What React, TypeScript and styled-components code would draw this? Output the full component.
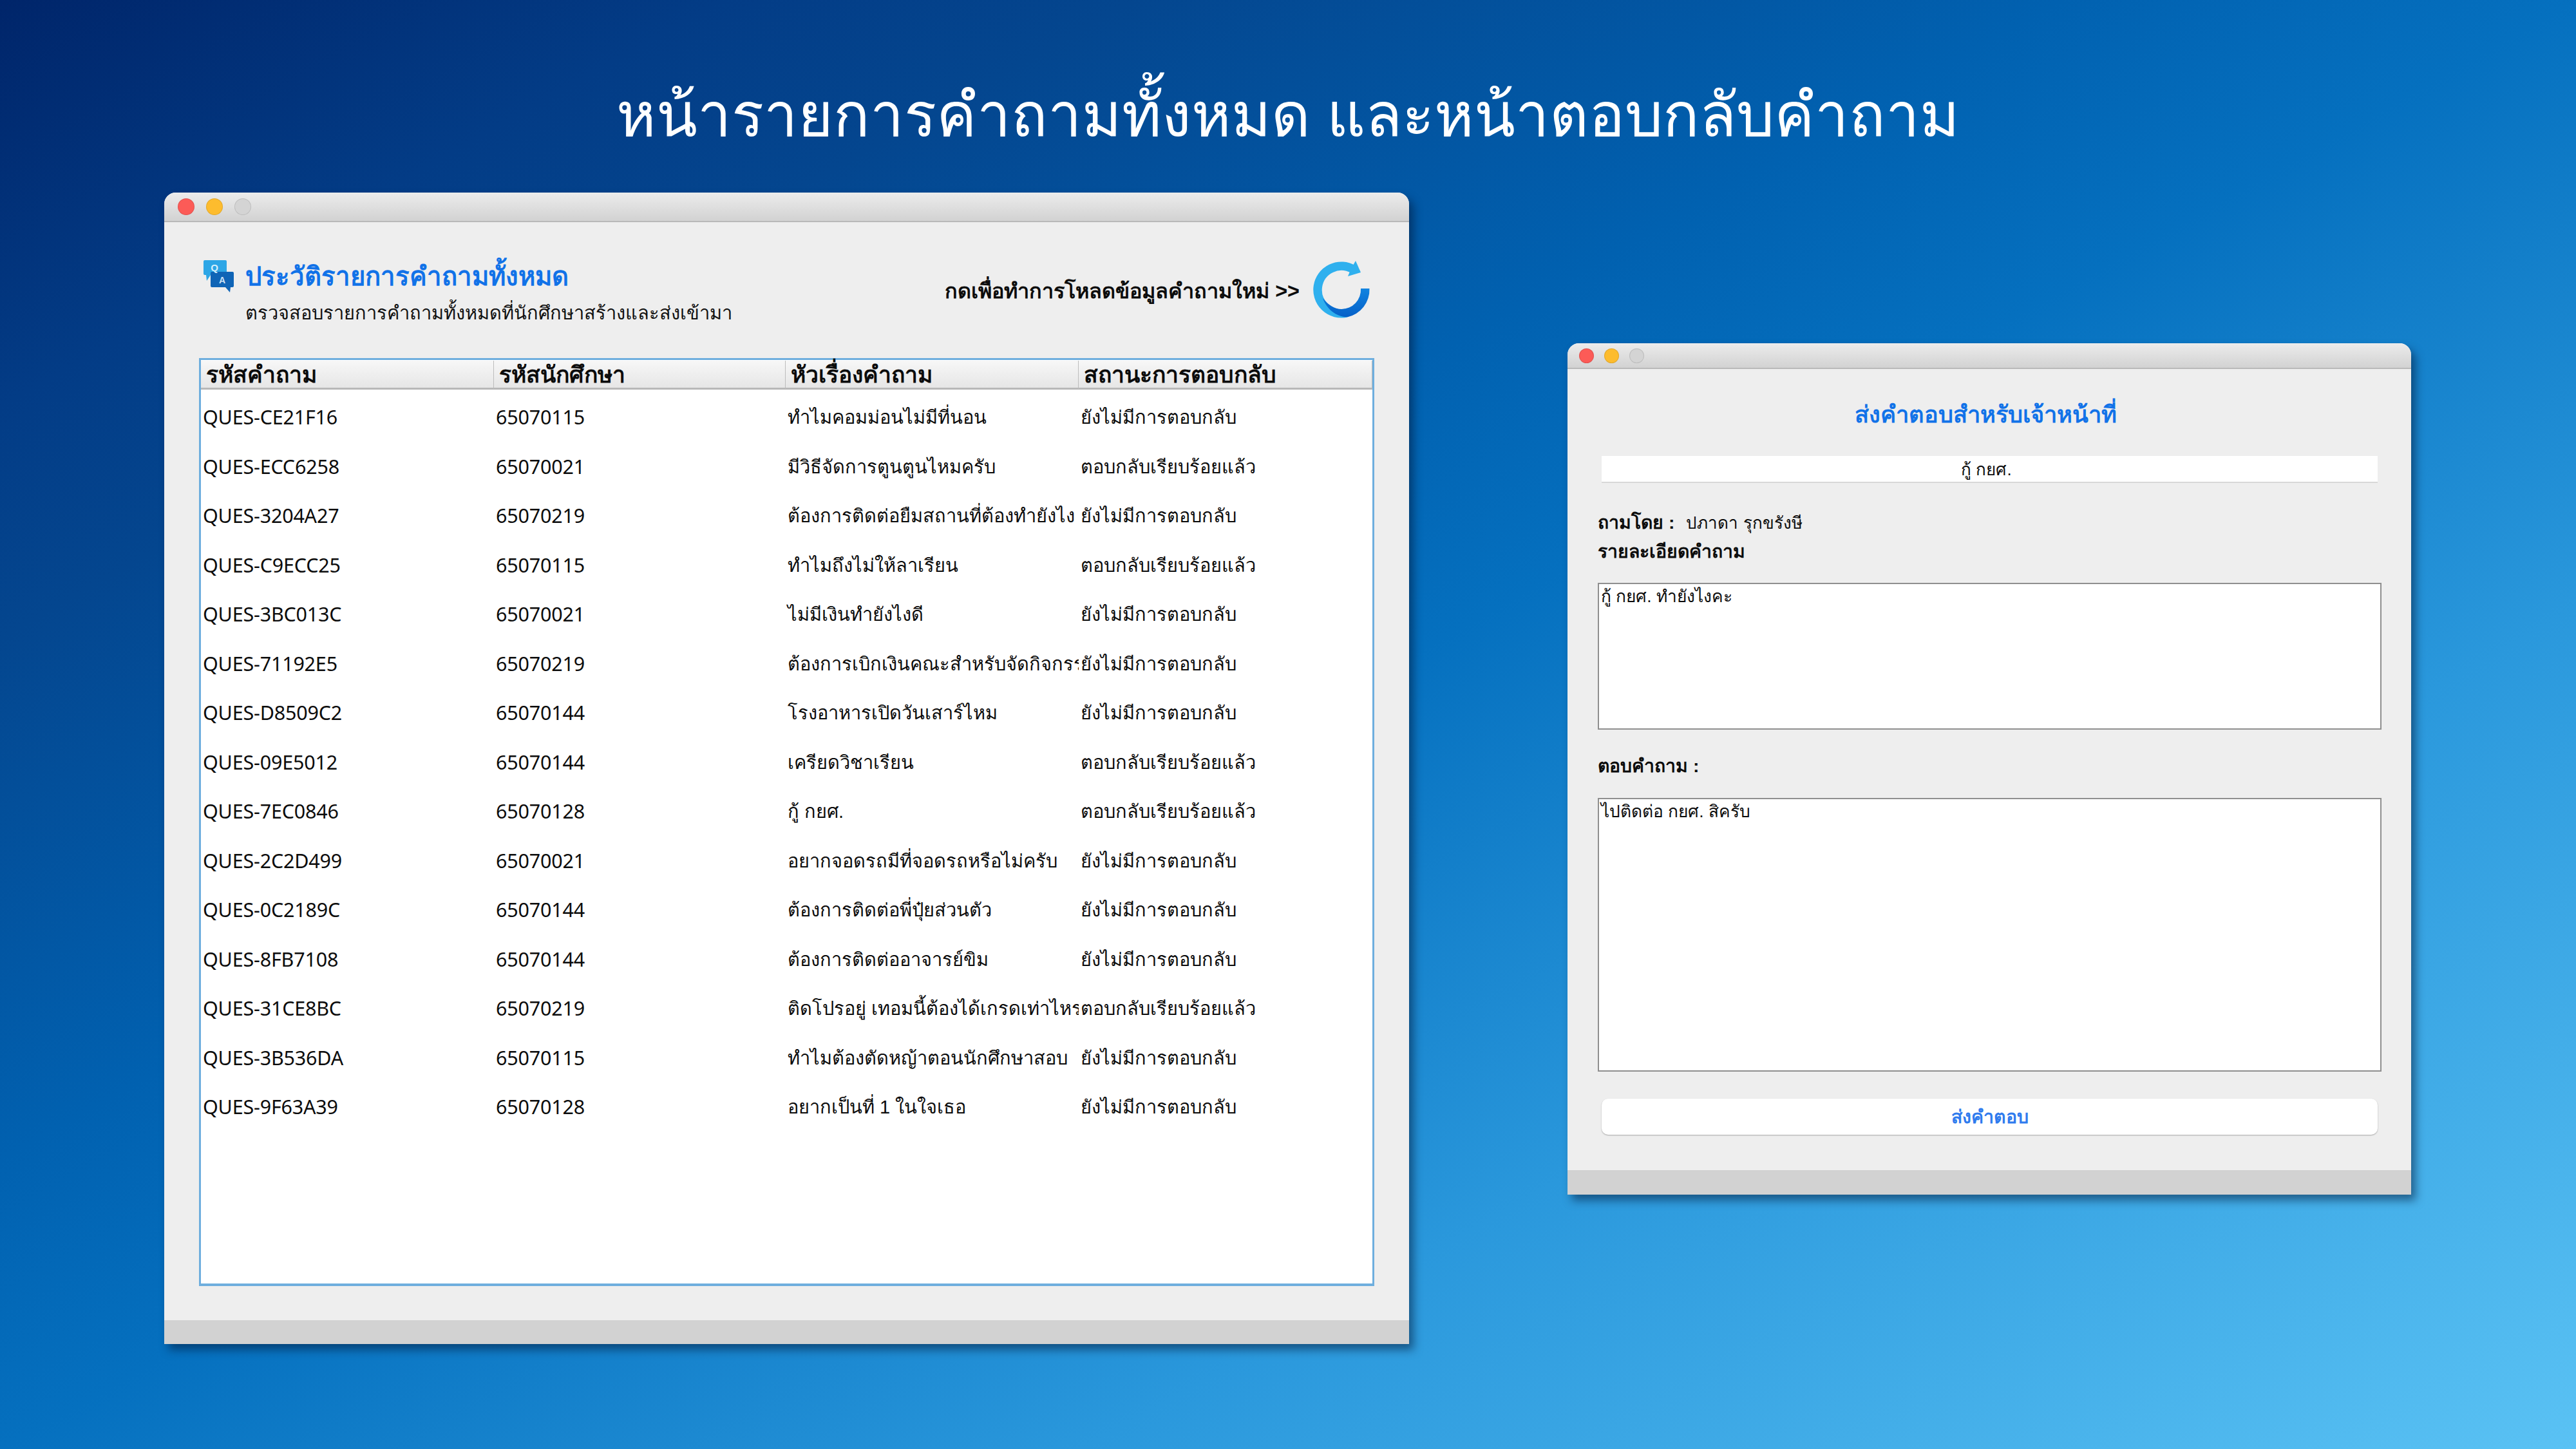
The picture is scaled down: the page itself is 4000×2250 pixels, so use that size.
import * as React from 'react';
import styled, { createGlobalStyle } from 'styled-components';

const FONT = `"Liberation Sans", "Noto Sans", "DejaVu Sans", sans-serif`;
const CODE_FONT = `"Noto Sans", "Liberation Sans", sans-serif`;

const GlobalStyle = createGlobalStyle`
    html, body {
        margin: 0;
        padding: 0;
        background: #0a6fc0;
    }
    * {
        box-sizing: border-box;
    }
`;

const Stage = styled.div`
    width: 4000px;
    height: 2250px;
    overflow: hidden;
    font-family: ${FONT};
    background: linear-gradient(to bottom right, #00256a 0%, #033c86 14%, #04468f 22%, #0161b0 40%, #0570bf 50%, #2a98dc 71%, #5ac2f4 100%);
`;

const Heading = styled.h1`
    margin: 0;
    height: 299px;
    padding-top: 100px;
    font-size: 93.5px;
    line-height: 158px;
    font-weight: 400;
    text-align: center;
    color: #ffffff;
`;

const Desktop = styled.div`
    display: flex;
    align-items: flex-start;
    gap: 246px;
    padding-left: 255px;
`;

const Window = styled.section<{ $width: number; $height: number; $offset: number }>`
    display: flex;
    flex-direction: column;
    flex: none;
    width: ${(p) => p.$width}px;
    height: ${(p) => p.$height}px;
    margin-top: ${(p) => p.$offset}px;
    border-radius: 18px 18px 0 0;
    overflow: hidden;
    background: #eeeeee;
    box-shadow: 7px 9px 14px rgba(0, 20, 50, 0.5);
`;

const TitleBar = styled.div<{ $height: number; $pad: number; $gap: number }>`
    display: flex;
    align-items: center;
    flex: none;
    gap: ${(p) => p.$gap}px;
    height: ${(p) => p.$height}px;
    padding-left: ${(p) => p.$pad}px;
    background: linear-gradient(#ececec, #d2d2d2);
    border-bottom: 2px solid #b9b9b9;
`;

const Light = styled.span<{ $color: string; $size: number }>`
    width: ${(p) => p.$size}px;
    height: ${(p) => p.$size}px;
    border-radius: 50%;
    background: ${(p) => p.$color};
    border: 1px solid rgba(0, 0, 0, 0.1);
`;

const Footer = styled.div<{ $height: number }>`
    flex: none;
    height: ${(p) => p.$height}px;
    background: #d2d2d2;
`;

const ListBody = styled.div`
    flex: 1;
    display: flex;
    flex-direction: column;
`;

const ListHeader = styled.div`
    display: flex;
    justify-content: space-between;
    height: 211px;
    padding: 59px 59px 0 61px;
`;

const ListTitleRow = styled.div`
    display: flex;
    gap: 18px;
`;

const ListTitle = styled.h2`
    margin: 0;
    font-size: 40.1px;
    line-height: 50px;
    font-weight: 700;
    color: #1172e8;
`;

const ListSubtitle = styled.p`
    margin: 12px 0 0;
    font-size: 29px;
    line-height: 40px;
    color: #111111;
`;

const Reload = styled.div`
    display: flex;
    align-items: flex-start;
    gap: 21px;
`;

const ReloadText = styled.span`
    margin-top: 28px;
    font-size: 32.4px;
    line-height: 40px;
    font-weight: 700;
    color: #0c0c0c;
`;

const Table = styled.div`
    width: 1825px;
    height: 1441px;
    margin-left: 54px;
    padding-top: 1px;
    background: #ffffff;
    border: 3px solid #6eaede;
    border-bottom-width: 4px;
`;

const Columns = styled.div`
    display: grid;
    grid-template-columns: 455px 453px 455px 456px;
`;

const HeaderCell = styled.div`
    height: 45px;
    padding-left: 8px;
    font-size: 35.5px;
    line-height: 44px;
    font-weight: 700;
    color: #0c0c0c;
    background: linear-gradient(#f7f7f7, #e6e6e6);
    border-bottom: 3px solid #b8b8b8;
    border-right: 1px solid #bdbdbd;
    white-space: nowrap;
`;

const Rows = styled.div`
    padding-top: 4px;
`;

const Cell = styled.div<{ $code: boolean }>`
    height: 76.5px;
    padding-left: 3px;
    font-family: ${(p) => (p.$code ? CODE_FONT : FONT)};
    font-size: ${(p) => (p.$code ? 30.5 : 29)}px;
    letter-spacing: ${(p) => (p.$code ? -0.2 : 0)}px;
    line-height: ${(p) => (p.$code ? 76 : 78)}px;
    color: #0c0c0c;
    white-space: nowrap;
    overflow: hidden;
`;

const ReplyBody = styled.div`
    flex: 1;
    display: flex;
    flex-direction: column;
    padding: 46px 46px 0 47px;
`;

const ReplyTitle = styled.h2`
    margin: 0;
    padding-right: 13px;
    font-size: 36.2px;
    line-height: 50px;
    font-weight: 700;
    text-align: center;
    color: #1172e8;
`;

const Combo = styled.div`
    width: 1205px;
    height: 42px;
    margin: 39px 0 0 6px;
    padding-right: 10px;
    font-size: 26px;
    line-height: 43px;
    text-align: center;
    color: #0c0c0c;
    background: #ffffff;
    border-bottom: 2px solid #d8d8d8;
`;

const Line = styled.div<{ $top: number }>`
    margin-top: ${(p) => p.$top}px;
    height: 40px;
    font-size: 26px;
    line-height: 40px;
    color: #0c0c0c;
`;

const Strong = styled.b`
    margin-right: 18px;
    font-size: 28.4px;
`;

const Area = styled.textarea<{ $height: number; $top: number }>`
    display: block;
    flex: none;
    width: 1217px;
    height: ${(p) => p.$height}px;
    margin: ${(p) => p.$top}px 0 0;
    padding: 4px 3px;
    font-family: ${FONT};
    font-size: 26.3px;
    line-height: 30px;
    color: #0c0c0c;
    background: #ffffff;
    border: 2px solid #8f8f8f;
    border-radius: 0;
    outline: none;
    resize: none;
    overflow: hidden;
`;

const SendButton = styled.button`
    width: 1205px;
    height: 56px;
    margin: 42px 0 0 6px;
    padding: 0;
    font-family: ${FONT};
    font-size: 28.5px;
    font-weight: 700;
    color: #2f7bee;
    background: #ffffff;
    border: none;
    border-radius: 10px;
    box-shadow: 0 1px 2px rgba(0, 0, 0, 0.3);
`;

const QaIcon = () => (
    <svg width="47" height="50" viewBox="0 0 47 50">
        <path d="M2 0H34a2 2 0 0 1 2 2V21a2 2 0 0 1-2 2H11L5 32 4 23H2a2 2 0 0 1-2-2V2a2 2 0 0 1 2-2Z" fill="#2da6e6" />
        <path d="M13 18H45a2 2 0 0 1 2 2V40a2 2 0 0 1-2 2H42L41 50 34 42H13a2 2 0 0 1-2-2V20a2 2 0 0 1 2-2Z" fill="#0f64b6" />
        <text x="17" y="17" textAnchor="middle" fontSize="15" fontWeight="700" fontFamily={FONT} fill="#d8f0fc">Q</text>
        <text x="29" y="36" textAnchor="middle" fontSize="14" fontWeight="700" fontFamily={FONT} fill="#cfe3f5">A</text>
    </svg>
);

const RefreshIcon = () => (
    <svg width="90" height="90" viewBox="9 9 90 90">
        <defs>
            <linearGradient id="refreshDark" x1="0" y1="0" x2="0" y2="1">
                <stop offset="0" stopColor="#1284e0" />
                <stop offset="1" stopColor="#0560c8" />
            </linearGradient>
        </defs>
        <path d="M60 91.1A36.8 36.8 0 1 1 71 23" fill="none" stroke="#2fb0ee" strokeWidth="13.5" />
        <path d="M75 10 83 28 63 34 68 22Z" fill="#2fb0ee" />
        <path d="M96.5 53A43.5 43.5 0 0 1 62 97.5C45 97 30 85 24 68 32 78 42 85 53 85A30 30 0 0 0 83 53Z" fill="url(#refreshDark)" />
    </svg>
);

const QUESTIONS = [
    ['QUES-CE21F16', '65070115', 'ทำไมคอมม่อนไม่มีที่นอน', 'ยังไม่มีการตอบกลับ'],
    ['QUES-ECC6258', '65070021', 'มีวิธีจัดการตูนตูนไหมครับ', 'ตอบกลับเรียบร้อยแล้ว'],
    ['QUES-3204A27', '65070219', 'ต้องการติดต่อยืมสถานที่ต้องทำยังไง', 'ยังไม่มีการตอบกลับ'],
    ['QUES-C9ECC25', '65070115', 'ทำไมถึงไม่ให้ลาเรียน', 'ตอบกลับเรียบร้อยแล้ว'],
    ['QUES-3BC013C', '65070021', 'ไม่มีเงินทำยังไงดี', 'ยังไม่มีการตอบกลับ'],
    ['QUES-71192E5', '65070219', 'ต้องการเบิกเงินคณะสำหรับจัดกิจกรรม', 'ยังไม่มีการตอบกลับ'],
    ['QUES-D8509C2', '65070144', 'โรงอาหารเปิดวันเสาร์ไหม', 'ยังไม่มีการตอบกลับ'],
    ['QUES-09E5012', '65070144', 'เครียดวิชาเรียน', 'ตอบกลับเรียบร้อยแล้ว'],
    ['QUES-7EC0846', '65070128', 'กู้ กยศ.', 'ตอบกลับเรียบร้อยแล้ว'],
    ['QUES-2C2D499', '65070021', 'อยากจอดรถมีที่จอดรถหรือไม่ครับ', 'ยังไม่มีการตอบกลับ'],
    ['QUES-0C2189C', '65070144', 'ต้องการติดต่อพี่ปุ๋ยส่วนตัว', 'ยังไม่มีการตอบกลับ'],
    ['QUES-8FB7108', '65070144', 'ต้องการติดต่ออาจารย์ขิม', 'ยังไม่มีการตอบกลับ'],
    ['QUES-31CE8BC', '65070219', 'ติดโปรอยู่ เทอมนี้ต้องได้เกรดเท่าไหร่ครับ', 'ตอบกลับเรียบร้อยแล้ว'],
    ['QUES-3B536DA', '65070115', 'ทำไมต้องตัดหญ้าตอนนักศึกษาสอบ', 'ยังไม่มีการตอบกลับ'],
    ['QUES-9F63A39', '65070128', 'อยากเป็นที่ 1 ในใจเธอ', 'ยังไม่มีการตอบกลับ'],
];

const COLUMN_NAMES = ['รหัสคำถาม', 'รหัสนักศึกษา', 'หัวเรื่องคำถาม', 'สถานะการตอบกลับ'];

const App: React.FunctionComponent = () => {
    return (
        <Stage>
            <GlobalStyle />
            <Heading>หน้ารายการคำถามทั้งหมด และหน้าตอบกลับคำถาม</Heading>
            <Desktop>
                <Window $width={1933} $height={1788} $offset={0}>
                    <TitleBar $height={46} $pad={21} $gap={18}>
                        <Light $size={26} $color="#fc5b57" />
                        <Light $size={26} $color="#fdbc2e" />
                        <Light $size={26} $color="#d4d4d4" />
                    </TitleBar>
                    <ListBody>
                        <ListHeader>
                            <ListTitleRow>
                                <QaIcon />
                                <div>
                                    <ListTitle>ประวัติรายการคำถามทั้งหมด</ListTitle>
                                    <ListSubtitle>ตรวจสอบรายการคำถามทั้งหมดที่นักศึกษาสร้างและส่งเข้ามา</ListSubtitle>
                                </div>
                            </ListTitleRow>
                            <Reload>
                                <ReloadText>กดเพื่อทำการโหลดข้อมูลคำถามใหม่ &gt;&gt;</ReloadText>
                                <RefreshIcon />
                            </Reload>
                        </ListHeader>
                        <Table>
                            <Columns>
                                {COLUMN_NAMES.map((name) => (
                                    <HeaderCell key={name}>{name}</HeaderCell>
                                ))}
                            </Columns>
                            <Rows>
                                {QUESTIONS.map((row) => (
                                    <Columns key={row[0]}>
                                        {row.map((value, i) => (
                                            <Cell key={i} $code={i < 2}>{value}</Cell>
                                        ))}
                                    </Columns>
                                ))}
                            </Rows>
                        </Table>
                    </ListBody>
                    <Footer $height={37} />
                </Window>
                <Window $width={1310} $height={1322} $offset={234}>
                    <TitleBar $height={40} $pad={18} $gap={16}>
                        <Light $size={23} $color="#fc5b57" />
                        <Light $size={23} $color="#fdbc2e" />
                        <Light $size={23} $color="#d4d4d4" />
                    </TitleBar>
                    <ReplyBody>
                        <ReplyTitle>ส่งคำตอบสำหรับเจ้าหน้าที่</ReplyTitle>
                        <Combo>กู้ กยศ.</Combo>
                        <Line $top={41}>
                            <Strong>ถามโดย :</Strong>ปภาดา รุกขรังษี
                        </Line>
                        <Line $top={5}>
                            <Strong>รายละเอียดคำถาม</Strong>
                        </Line>
                        <Area $height={228} $top={29} readOnly defaultValue="กู้ กยศ. ทำยังไงคะ" />
                        <Line $top={36}>
                            <Strong>ตอบคำถาม :</Strong>
                        </Line>
                        <Area $height={425} $top={30} readOnly defaultValue="ไปติดต่อ กยศ. สิครับ" />
                        <SendButton>ส่งคำตอบ</SendButton>
                    </ReplyBody>
                    <Footer $height={38} />
                </Window>
            </Desktop>
        </Stage>
    );
};

export default App;
